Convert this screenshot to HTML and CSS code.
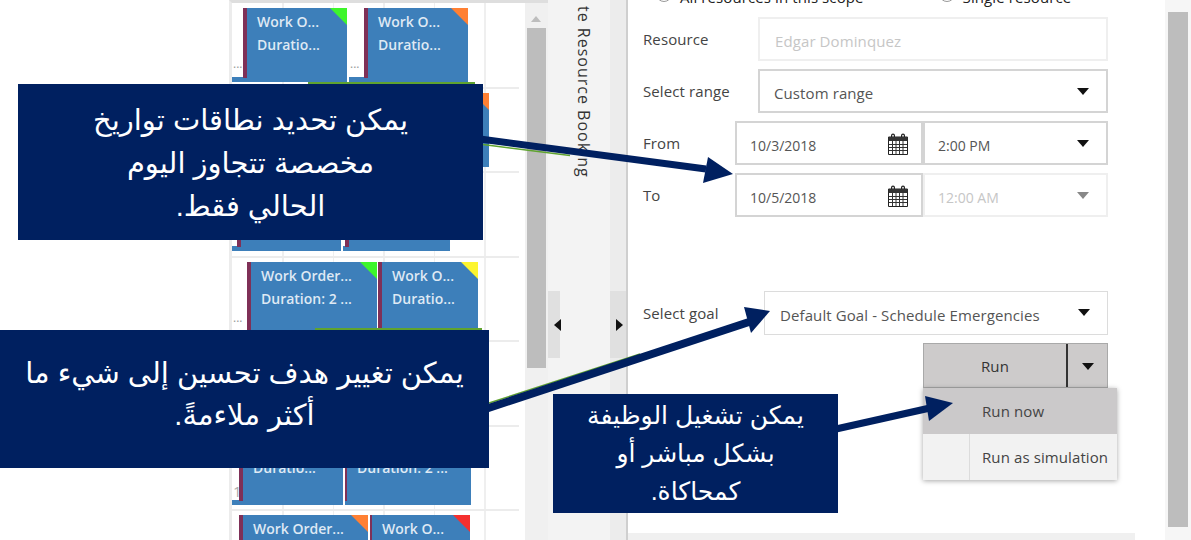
FILE: index.html
```html
<!DOCTYPE html>
<html>
<head>
    <title>Create Resource Booking</title>
    <meta name="viewport" content="width=device-width, initial-scale=1.0">
    <link rel="stylesheet" href="styles.css">
</head>
<body>
    <div class="page">
        <div class="blank"></div>

        <div class="board">
            <div class="row">
                <div class="tail t11"><span class="more">...</span></div>
                <div class="card w104 green"><p>Work O...</p><p>Duratio...</p></div>
                <div class="tail t15 gap2"><span class="more">...</span></div>
                <div class="card w104 orange"><p>Work O...</p><p>Duratio...</p></div>
            </div>
            <div class="row">
                <div class="tail t11"></div>
                <div class="card w114 green"></div>
                <div class="card w130 orange gap2"></div>
            </div>
            <div class="row">
                <div class="tail t5"></div>
                <div class="card w104 yellow"></div>
                <div class="tail t2 gap2"></div>
                <div class="card w105 green"></div>
            </div>
            <div class="row">
                <div class="tail t15 clear"><span class="more">...</span></div>
                <div class="card w130 green"><p>Work Order...</p><p>Duration: 2 ...</p></div>
                <div class="card w100 yellow gap1"><p>Work O...</p><p>Duratio...</p></div>
            </div>
            <div class="row"></div>
            <div class="row">
                <div class="tail t7"><span class="more digit">1</span></div>
                <div class="card w104 orange"><p>&nbsp;</p><p>Duratio...</p></div>
                <div class="card w126 red gap2 thin"><p>&nbsp;</p><p>Duration: 2 ...</p></div>
            </div>
            <div class="row last">
                <div class="tail t7 clear"></div>
                <div class="card w129 orange"><p>Work Order...</p><p>Duration: 2 ...</p></div>
                <div class="card w100 red gap2 thin"><p>Work O...</p><p>Duratio...</p></div>
            </div>
        </div>

        <div class="board-scroll">
            <div class="scroll-up"></div>
            <div class="scroll-thumb"></div>
        </div>

        <div class="tab">
            <div class="handle"><i class="arrow-left"></i></div>
            <div class="tab-title">te Resource Booking</div>
        </div>
        <div class="tab-edge">
            <div class="handle"><i class="arrow-right"></i></div>
        </div>

        <div class="panel">
            <div class="radios">
                <span class="radio">All resources in this scope</span>
                <span class="radio second">Single resource</span>
            </div>

            <div class="field-row">
                <label class="w115">Resource</label>
                <div class="box disabled grow">Edgar Dominquez</div>
            </div>
            <div class="field-row">
                <label class="w115">Select range</label>
                <div class="box strong grow">Custom range<i class="caret"></i></div>
            </div>
            <div class="field-row">
                <label class="w92">From</label>
                <div class="box strong date">10/3/2018
                    <svg class="cal" viewBox="0 0 20 22"><use href="#cal"></use></svg>
                </div>
                <div class="box strong time">2:00 PM<i class="caret"></i></div>
            </div>
            <div class="field-row">
                <label class="w92">To</label>
                <div class="box strong date">10/5/2018
                    <svg class="cal" viewBox="0 0 20 22"><use href="#cal"></use></svg>
                </div>
                <div class="box disabled time">12:00 AM<i class="caret dim"></i></div>
            </div>
            <div class="field-row goal">
                <label class="w121">Select goal</label>
                <div class="box grow">Default Goal - Schedule Emergencies<i class="caret"></i></div>
            </div>

            <div class="run-wrap">
                <div class="run">
                    <div class="run-main">Run</div>
                    <div class="run-more"><i class="caret"></i></div>
                </div>
                <div class="menu">
                    <div class="menu-item active">Run now</div>
                    <div class="menu-item">Run as simulation</div>
                </div>
            </div>
            <div class="panel-foot"></div>
        </div>

        <div class="panel-scroll"><div class="panel-thumb"></div></div>
    </div>

    <svg class="defs" width="0" height="0">
        <symbol id="cal" viewBox="0 0 20 22">
            <path d="M5 0.5a2 2 0 0 1 2 2v2H5.8V2.6a.8.8 0 0 0-1.6 0v2H3v-2a2 2 0 0 1 2-2zM15 0.5a2 2 0 0 1 2 2v2h-1.2V2.6a.8.8 0 0 0-1.6 0v2H13v-2a2 2 0 0 1 2-2z" fill="#222"/>
            <path d="M0.5 4h19v17.5H0.5z" fill="#fff" stroke="#222"/>
            <path d="M0.5 4h19v4h-19z" fill="#333"/>
            <path d="M1 11.5h18M1 14.5h18M1 17.5h18M4.5 8v13M8 8v13M11.5 8v13M15 8v13" stroke="#333" stroke-width="1" fill="none"/>
        </symbol>
    </svg>

    <!-- callouts and arrows lie over the app -->
    <div class="green-line one"></div>
    <div class="green-line two"></div>
    <svg class="arrows" width="1191" height="540" viewBox="0 0 1191 540">
        <path d="M483 144.5L570 155.5M489 403L640 354" stroke="#5fa32f" stroke-width="1.5" fill="none"/>
        <path d="M480 139L706 169" stroke="#002060" stroke-width="7" fill="none"/>
        <path d="M733 174L708 157L703 183z" fill="#002060"/>
        <path d="M487 408.5L749 322" stroke="#002060" stroke-width="8" fill="none"/>
        <path d="M770 311L744 307L751 333z" fill="#002060"/>
        <path d="M836 429L930 408" stroke="#002060" stroke-width="7" fill="none"/>
        <path d="M953 403L925 396L929 421z" fill="#002060"/>
    </svg>

    <div class="callout c1" lang="ar" dir="rtl">
        <p>يمكن تحديد نطاقات تواريخ</p>
        <p>مخصصة  تتجاوز اليوم</p>
        <p>الحالي فقط.</p>
    </div>
    <div class="callout c2" lang="ar" dir="rtl">
        <p>يمكن تغيير  هدف تحسين إلى شيء ما</p>
        <p>أكثر ملاءمةً.</p>
    </div>
    <div class="callout c3" lang="ar" dir="rtl">
        <p>يمكن تشغيل الوظيفة</p>
        <p>بشكل مباشر أو</p>
        <p>كمحاكاة.</p>
    </div>
</body>
</html>
```

FILE: styles.css
```css
* {
    box-sizing: border-box;
}

html, body {
    margin: 0;
    height: 540px;
    overflow: hidden;
    background-color: white;
}

body {
    position: relative;
    font-family: "Open Sans", sans-serif;
    font-size: 15px;
    letter-spacing: 0.1px;
    color: #444;
}

p {
    margin: 0;
}

.defs {
    display: block;
}

.page {
    display: flex;
    height: 540px;
}

.blank {
    width: 229px;
    flex: none;
}

/* schedule board */
.board {
    width: 296px;
    flex: none;
    height: 540px;
    padding-top: 1px;
    overflow: hidden;
    border-left: 3px solid #ececec;
    border-top: 3px solid #dedede;
    background-image: repeating-linear-gradient(to right, transparent 0, transparent 49px, #efefef 49px, #efefef 50.6px);
    background-size: 255px 100%;
    background-repeat: no-repeat;
    background-position: 1px 0;
}

.row {
    display: flex;
    align-items: flex-start;
    height: 84.5px;
    margin-right: 6px;
    padding-top: 4px;
    border-bottom: 2px solid #ececec;
}

.row.last {
    border-bottom: none;
}

.tail {
    position: relative;
    flex: none;
    height: 5px;
    margin-top: 69px;
    background-color: #3d7fba;
}

.tail.clear {
    background-color: transparent;
}

.t2 { width: 2px; }
.t5 { width: 5px; }
.t7 { width: 7px; }
.t11 { width: 11px; }
.t15 { width: 15px; }

.more {
    position: absolute;
    left: 1px;
    bottom: 11px;
    font-size: 12px;
    letter-spacing: 0;
    line-height: 14px;
    color: #999;
}

.digit {
    bottom: 6px;
    font-size: 15px;
    line-height: 16px;
    color: #aaa;
}

.card {
    position: relative;
    flex: none;
    height: 74px;
    padding: 2px 0 0 14px;
    background-color: #3d7fba;
    color: #dfe9f4;
    font-weight: 600;
    font-size: 14px;
    letter-spacing: 0;
    line-height: 23px;
    white-space: nowrap;
}

/* maroon stripe on the left of a booking */
.card::before {
    content: "";
    position: absolute;
    left: 0;
    top: 0;
    bottom: 4px;
    width: 4px;
    background-color: #7f3057;
}

.card.thin {
    padding-left: 12px;
}

.card.thin::before {
    width: 2px;
}

/* status corner */
.card::after {
    content: "";
    position: absolute;
    right: 0;
    top: 0;
    border-style: solid;
    border-width: 0 17px 17px 0;
    border-color: transparent var(--corner) transparent transparent;
}

.green { --corner: #3ef52b; }
.orange { --corner: #ff8033; }
.yellow { --corner: #fdf52f; }
.red { --corner: #f5302f; }

.w100 { width: 100px; }
.w104 { width: 104px; }
.w105 { width: 105px; }
.w114 { width: 114px; }
.w126 { width: 126px; }
.w129 { width: 129px; }
.w130 { width: 130px; }

.gap1 { margin-left: 1px; }
.gap2 { margin-left: 2px; }

/* scrollbar next to the board */
.board-scroll {
    width: 23px;
    flex: none;
    padding: 13px 0 0 2px;
    background-color: #f0f0f0;
    border-top: 3px solid #dedede;
}

.scroll-up {
    width: 0;
    margin: 0 0 6px 4px;
    border-style: solid;
    border-width: 0 5px 6px 5px;
    border-color: transparent transparent #bdbdbd transparent;
}

.scroll-thumb {
    width: 19px;
    height: 340px;
    background-color: #bdbdbd;
}

/* collapsed tab with the vertical title */
.tab {
    position: relative;
    width: 62px;
    flex: none;
    background-color: #f3f3f3;
}

.tab-title {
    position: absolute;
    left: 26px;
    top: 6px;
    writing-mode: vertical-rl;
    font-size: 16px;
    letter-spacing: 1px;
    line-height: 20px;
    color: #333;
    white-space: nowrap;
}

.tab-edge {
    position: relative;
    width: 18px;
    flex: none;
    background-color: #ececec;
    border-right: 2px solid #cfcfcf;
}

.handle {
    position: absolute;
    left: 0;
    top: 291px;
    width: 12px;
    height: 67px;
    display: flex;
    align-items: center;
    justify-content: center;
    background-color: #e0e0e0;
}

.tab-edge .handle {
    width: 16px;
    padding-left: 2px;
}

.arrow-left {
    border-style: solid;
    border-width: 6px 7px 6px 0;
    border-color: transparent #111 transparent transparent;
    margin-left: 6px;
}

.arrow-right {
    border-style: solid;
    border-width: 6px 0 6px 7px;
    border-color: transparent transparent transparent #111;
}

/* form panel */
.panel {
    position: relative;
    width: 537px;
    flex: none;
    padding: 0 57px 0 15px;
    overflow: hidden;
}

.radios {
    height: 17px;
    margin-top: -13px;
    margin-bottom: 13px;
    padding-left: 37px;
    display: flex;
    white-space: nowrap;
    color: #222;
}

.radio {
    position: relative;
}

.radio::before {
    content: "";
    position: absolute;
    left: -24px;
    bottom: 2px;
    width: 14px;
    height: 14px;
    border: 1px solid #999;
    border-radius: 50%;
}

.second {
    margin-left: 99px;
}

.field-row {
    display: flex;
    align-items: center;
    height: 44px;
    margin-bottom: 8px;
}

.goal {
    margin-top: 74px;
}

label {
    flex: none;
    color: #444;
}

.w115 { width: 115px; }
.w92 { width: 92px; }
.w121 { width: 121px; }

.box {
    position: relative;
    height: 44px;
    padding: 3px 15px 0;
    display: flex;
    align-items: center;
    border: 1px solid #dcdcdc;
    color: #555;
    white-space: nowrap;
}

.grow {
    flex-grow: 1;
}

.box.strong {
    border: 2px solid #d4d4d4;
    padding-left: 14px;
    padding-top: 4px;
}

.box.disabled {
    border: 2px solid #efefef;
    color: #c6c6c6;
    padding-top: 4px;
}

.date {
    width: 188px;
    font-size: 14px;
    letter-spacing: 0;
}

.time {
    width: 185px;
    font-size: 14px;
    letter-spacing: 0;
    padding-left: 13px;
}

.box.strong.time, .box.disabled.time {
    padding-left: 13px;
}

.box.strong.date {
    padding-left: 13px;
}

.caret {
    position: absolute;
    right: 17px;
    top: 17px;
    border-style: solid;
    border-width: 7px 6.5px 0 6.5px;
    border-color: #111 transparent transparent transparent;
}

.caret.dim {
    border-top-color: #888;
}

.cal {
    position: absolute;
    right: 13px;
    top: 10px;
    width: 20px;
    height: 22px;
}

.run-wrap {
    position: relative;
    width: 185px;
    margin-left: 280px;
}

.run {
    display: flex;
    height: 45px;
    border: 1px solid #a9a9a9;
    background-color: #cdcbcb;
    color: #333;
}

.run-main {
    flex-grow: 1;
    display: flex;
    align-items: center;
    justify-content: center;
    border-right: 2px solid #333;
}

.run-more {
    position: relative;
    width: 39px;
}

.run-more .caret {
    right: 13px;
    top: 19px;
}

.menu {
    position: absolute;
    left: 0;
    top: 45px;
    width: 194px;
    background-color: #f2f2f2;
    box-shadow: 0 1px 5px rgba(0, 0, 0, 0.35);
}

.menu-item {
    height: 46px;
    padding-left: 59px;
    display: flex;
    align-items: center;
    color: #444;
    background-image: linear-gradient(#dcdcdc, #dcdcdc);
    background-size: 1px 100%;
    background-position: 46px 0;
    background-repeat: no-repeat;
}

.menu-item.active {
    background-color: #cbc9ca;
    background-image: none;
}

.panel-foot {
    position: absolute;
    left: 0;
    right: 30px;
    bottom: 0;
    height: 7px;
    background-color: #f0f0f0;
}

.panel-scroll {
    flex-grow: 1;
    padding: 12px 3px 0 3px;
    background-color: #f6f6f6;
}

.panel-thumb {
    height: 515px;
    background-color: #bdbdbd;
}

/* overlays */
.arrows {
    position: absolute;
    left: 0;
    top: 0;
}

.green-line {
    position: absolute;
    height: 2px;
    background-color: #5fa32f;
}

.green-line.one {
    left: 308px;
    top: 82px;
    width: 167px;
}

.green-line.two {
    left: 315px;
    top: 328px;
    width: 167px;
}

.callout {
    position: absolute;
    background-color: #002060;
    color: white;
    font-family: "Liberation Sans", "DejaVu Sans", sans-serif;
    letter-spacing: 0;
    text-align: center;
}

.c1 {
    left: 18px;
    top: 84px;
    width: 465px;
    height: 156px;
    padding-top: 15px;
    font-size: 29px;
    line-height: 43px;
}

.c2 {
    left: 0;
    top: 330px;
    width: 489px;
    height: 138px;
    padding-top: 22px;
    font-size: 29px;
    line-height: 42px;
}

.c3 {
    left: 553px;
    top: 394px;
    width: 285px;
    height: 119px;
    padding-top: 2px;
    font-size: 25px;
    line-height: 38px;
}
```
